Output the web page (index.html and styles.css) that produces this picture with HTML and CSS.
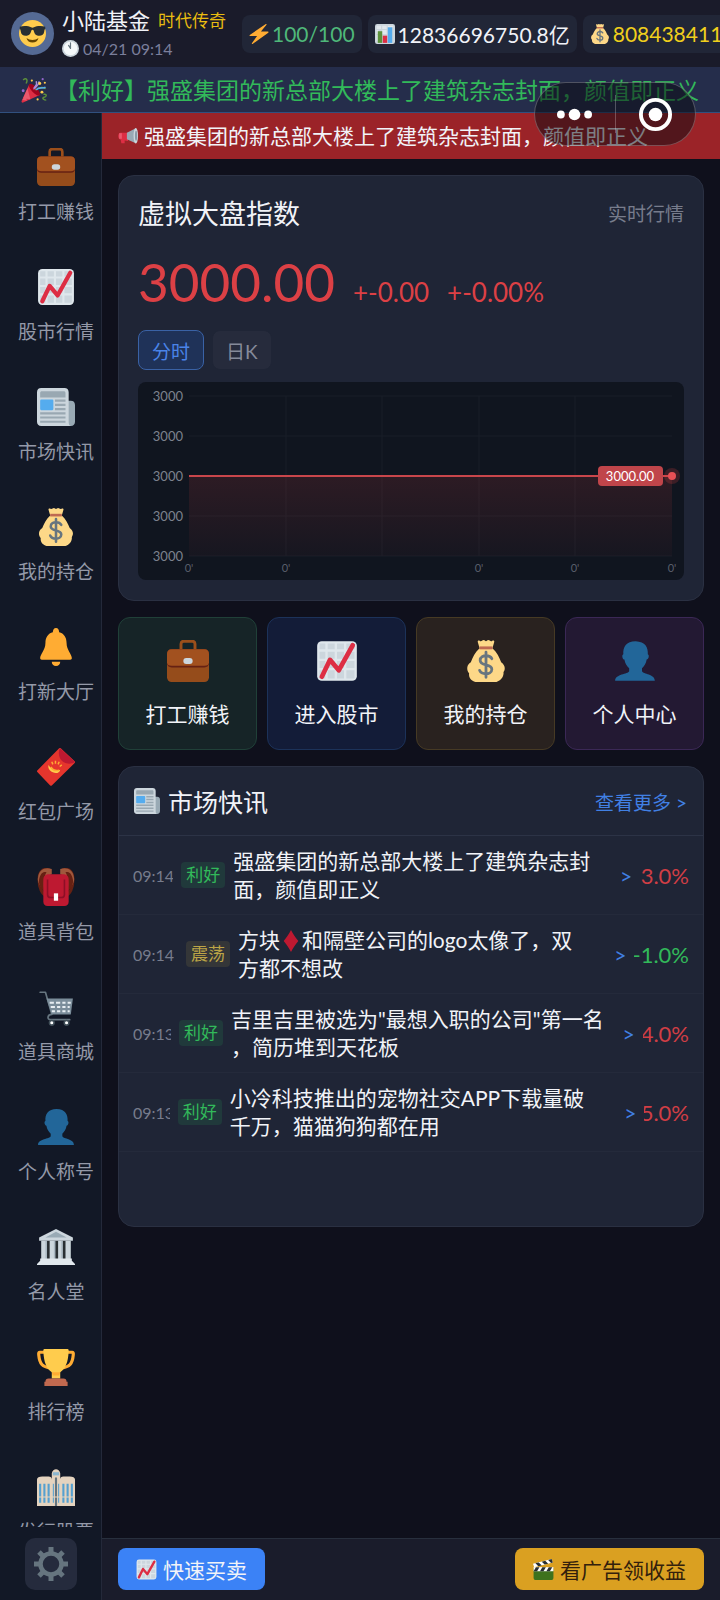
FILE: index.html
```html
<!DOCTYPE html>
<html lang="zh-CN">
  <head>
    <meta charset="UTF-8" />
    <meta name="viewport" content="width=device-width, initial-scale=1.0" />
    <title>小陆基金</title>
    <link rel="stylesheet" href="styles.css">
  </head>
  <body>
    <!-- icon set -->
    <svg class="sprite" aria-hidden="true">
      <symbol id="cool" viewBox="0 0 36 36">
        <circle cx="18" cy="18" r="18" fill="#ffcc4d"/>
        <path d="M10 24c4 3.500 12 3.500 16 0-1 4-4 6-8 6s-7-2-8-6z" fill="#664500"/>
        <path d="M1 9c5-1.500 12-1 15 .8 1 .5 3 .5 4 0C23 8 30 7.500 35 9v3c-1 .5-1 1-1.300 3-.6 4.500-3 6-6.700 6-5 0-6.500-3-7.500-7-.3-1.500-2.700-1.500-3 0-1 4-2.500 7-7.500 7-3.700 0-6.100-1.500-6.700-6C2 13 2 12.500 1 12z" fill="#292f33"/>
      </symbol>
      <symbol id="clock" viewBox="0 0 36 36">
        <circle cx="18" cy="18" r="18" fill="#ccd6dd"/>
        <circle cx="18" cy="18" r="14.500" fill="#f5f8fa"/>
        <path d="M18 6v12M18 18l-4-6.500" stroke="#66757f" stroke-width="2.500" stroke-linecap="round"/>
      </symbol>
      <symbol id="bolt" viewBox="0 0 36 36">
        <path d="M35 14.500c-.2-.6-.5-.8-1.200-.8H21.500L31.500 1.200c.6-.9-.3-1.600-1.200-1.100L1.400 19.800c-.8.700-.5 1.900.8 1.900h12.300L5.200 34.700c-.6 1 .3 1.700 1.200 1.200L34.700 15.700c.4-.3.500-.7.300-1.200z" fill="#ffac33"/>
      </symbol>
      <symbol id="bars" viewBox="0 0 36 36">
        <rect width="36" height="36" rx="4" fill="#ccd6dd"/>
        <path d="M3 3h8v6H3zm10 0h8v6h-8zm10 0h10v3H23zM3 11h3v7H3zm10 0h8v7h-8zM3 20h2v10H3z" fill="#e1e8ed"/>
        <path d="M5 13h8v21H5z" fill="#5c913b"/>
        <path d="M14 21h8v13h-8z" fill="#dd2e44"/>
        <path d="M23 6h8v28h-8z" fill="#55acee"/>
      </symbol>
      <symbol id="bag" viewBox="0 0 36 36">
        <path d="M12.500 7L11 2c-.5-1.500.8-2 1.800-1.200C14 1.600 15 .1 16 .1S17.300 1 18 1s1-.9 2-.9 2 1.500 3.200.7c1-.8 2.300-.3 1.800 1.200L23.500 7z" fill="#fdd888"/>
        <path d="M23.500 7c4 3.500 6 8 7.500 12 4 3 3.500 6.500 2 8.500.5 4-2.500 7.500-6 8.500H9c-3.500-1-6-3.500-5.500-7.500C1 25.500 1.500 21 5 19c1.500-4 3.500-8.500 7.500-12z" fill="#fdd888"/>
        <path d="M12.500 5.500h11V8h-11z" fill="#bf6952"/>
        <path d="M23 16c-1-2-3-2.500-5-2.500s-5 1-5 4c0 5 10 2.500 10 7.500 0 3-3 4-5 4s-4.500-.5-5.500-3M18 10.500V32" fill="none" stroke="#67757f" stroke-width="2.400" stroke-linecap="round"/>
      </symbol>
      <symbol id="party" viewBox="0 0 36 36">
        <path d="M11.500 10L1 33c-.8 2 .3 3 2 2.300L26 25z" fill="#dd2e44"/>
        <path d="M9 15.500L3 29l10 2zM6 22l-4 10 6 1z" fill="#ea596e"/>
        <ellipse cx="18.500" cy="17.500" rx="4" ry="10.500" transform="rotate(-43 18.500 17.500)" fill="#a0041e"/>
        <path d="M18 17c-1-5 6-4 3-11M19 16c2-5 6-3 6-10" fill="none" stroke="#aa8dd8" stroke-width="2"/>
        <path d="M20 18c4-3 9-5 14-2" fill="none" stroke="#77b255" stroke-width="2"/>
        <path d="M3 4c4-4 7 0 4 5M31 24c5-1 5 3 1 4s0 4 3 4" fill="none" stroke="#5c913b" stroke-width="2"/>
        <path d="M21 18c3-5 8-1 13-4" fill="none" stroke="#55acee" stroke-width="2"/>
        <g fill="#ffcc4d"><circle cx="26" cy="9" r="2"/><circle cx="33" cy="8" r="1.500"/><circle cx="29" cy="21" r="2"/><circle cx="15" cy="5" r="1.500"/><circle cx="23" cy="31" r="1.500"/></g>
        <g fill="#9266cc"><circle cx="3" cy="19" r="2"/><circle cx="30" cy="3" r="1.500"/></g>
      </symbol>
      <symbol id="horn" viewBox="0 0 36 36">
        <path d="M4 12h14v15l-6-1v5H6l-1-6c-6-1-6-12-1-13z" fill="#dd2e44"/>
        <path d="M2 13h5v10H2z" fill="#ea596e"/>
        <path d="M16 12L32 4v27l-16-7z" fill="#99aab5"/>
        <ellipse cx="32" cy="17.500" rx="4" ry="14" fill="#ccd6dd"/>
        <ellipse cx="32.500" cy="17.500" rx="2" ry="9" fill="#8899a6"/>
      </symbol>
      <symbol id="case" viewBox="0 0 36 36">
        <path d="M12 9V3.500C12 2 13 1 14.500 1h7C23 1 24 2 24 3.500V9" fill="none" stroke="#9b4f1b" stroke-width="2.500"/>
        <rect y="8" width="36" height="28" rx="4" fill="#954c1b"/>
        <path d="M0 12c0-2.500 1.500-4 4-4h28c2.500 0 4 1.500 4 4v8c0 2-1.500 3.500-4 3.500H4c-2.500 0-4-1.500-4-3.500z" fill="#662113"/>
        <path d="M0 12c0-2.500 1.500-4 4-4h28c2.500 0 4 1.500 4 4v7c0 2-1.500 3-4 3H4c-2.500 0-4-1-4-3z" fill="#a2511f"/>
        <rect x="14" y="15.500" width="8" height="5" rx="2.500" fill="#ccd6dd"/>
      </symbol>
      <symbol id="up" viewBox="0 0 36 36">
        <rect x="1" y="1" width="34" height="34" rx="4" fill="#dfe7ec"/>
        <path d="M3 3h5v5H3zm7 0h6v5h-6zm8 0h6v5h-6zm8 0h7v5h-7zM3 10h5v6H3zm7 0h6v6h-6zm8 0h6v6h-6zm8 0h7v6h-7zM3 18h5v6H3zm7 0h6v6h-6zm8 0h6v6h-6zm8 0h7v6h-7zM3 26h5v7H3zm7 0h6v7h-6zm8 0h6v7h-6zm8 0h7v7h-7z" fill="#ccd6dd"/>
        <path d="M5 31.500l7-14.500 7.500 9L31.500 4.500" fill="none" stroke="#dd2e44" stroke-width="4" stroke-linecap="round" stroke-linejoin="round"/>
      </symbol>
      <symbol id="paper" viewBox="0 0 36 36">
        <path d="M27 12h5c2.500 0 4 1.500 4 4v16c0 2.500-1.500 4-4 4h-6z" fill="#99aab5"/>
        <path d="M0 4c0-2.500 1.500-4 4-4h22c2.500 0 4 1.500 4 4v28c0 2 .5 4 2 4H4c-2.500 0-4-1.500-4-4z" fill="#ccd6dd"/>
        <path d="M3 5c0-1.500.5-2 2-2h20c1.500 0 2 .5 2 2v4H3zM17 11h10v2H17zm0 4h10v2H17zm0 4h10v2H17zM3 23h24v2H3zm0 4h24v2H3zm0 4h24v2H3z" fill="#99a8b2"/>
        <rect x="3" y="11" width="12.500" height="10" rx="1" fill="#55acee"/>
      </symbol>
      <symbol id="bell" viewBox="0 0 36 36">
        <path d="M14 32h8c0 2.500-1.500 4-4 4s-4-1.500-4-4zM28 14c0 7 5 11 5 14.500 0 1-.5 1.500-1.500 1.500h-27C3.500 30 3 29.500 3 28.500 3 25 8 21 8 14c0-5 2.500-9 7-10 0-2 1-4 3-4s3 2 3 4c4.500 1 7 5 7 10z" fill="#ffac33"/>
      </symbol>
      <symbol id="redpack" viewBox="0 0 36 36">
        <path d="M21 .3c.5-.5 1-.5 1.500 0L35.700 12.600c.5.5.5 1 0 1.500L14 35.500c-.5.5-1 .5-1.500 0L.3 22.700c-.5-.5-.5-1 0-1.500z" fill="#e5352d"/>
        <path d="M21.700 0L36 13.300c-4 2.500-9 1.700-12-.8s-4.500-8-2.300-12.500z" fill="#be1931"/>
        <path d="M11 16c2 4 6 6 11 4.500-.5 3-4 4-7 2.500s-5-4-4-7z" fill="#ffcc4d"/>
        <path d="M13 18c2 3 5 4 8 3M14 13l1 2.500M17.500 12v3M21 13l-1 2.500M23.500 16l-2 1.500" fill="none" stroke="#ffac33" stroke-width="1.400"/>
      </symbol>
      <symbol id="pack" viewBox="0 0 36 36">
        <path d="M12 2C6 0 2 3 2 11c0 8 3 14 7 15M24 2c6-2 10 1 10 9 0 8-3 14-7 15" fill="none" stroke="#662113" stroke-width="3"/>
        <path d="M1 9C2 1 8-1 14 1v5C8 7 7 14 7 20 3 18 0 13 1 9zM35 9C34 1 28-1 22 1v5c6 1 7 8 7 14 4-2 7-7 6-11z" fill="#a0583c"/>
        <path d="M2 11C3 5 6 3 9 4 6 9 6 15 7 22 4 20 1 15 2 11zM34 11c-1-6-4-8-7-7 3 5 3 11 2 18 3-2 6-7 5-11z" fill="#662113"/>
        <path d="M6 11c0-3 2-5 5-5h14c3 0 5 2 5 5v21c0 2.500-1.500 4-4 4H10c-2.500 0-4-1.500-4-4z" fill="#be1931"/>
        <path d="M10 11v14c0 2 1 3 3 3h10c2 0 3-1 3-3V11" fill="none" stroke="#8d0f26" stroke-width="1.500"/>
        <path d="M16 24h4v7h-4z" fill="#fff"/>
      </symbol>
      <symbol id="cart" viewBox="0 0 36 36">
        <path d="M3 4h5l6 21c-4 0-5 5-1 5h18" fill="none" stroke="#66757f" stroke-width="1.600" stroke-linecap="round" stroke-linejoin="round"/>
        <path d="M9 10h25l-2 15H14z" fill="#7b8d9a"/>
        <path d="M12 13h4v2h-4zm6 0h4v2h-4zm6 0h3v2h-3zm5 0h3v2h-3zM13 17h4v2h-4zm6 0h3v2h-3zm5 0h3v2h-3zm5 0h2v2h-2zM14 21h3v2h-3zm5 0h3v2h-3zm5 0h3v2h-3zm5 0h2v2h-2z" fill="#e8eef2"/>
        <circle cx="14" cy="33" r="2.200" fill="#fff" stroke="#414f59" stroke-width="1.500"/>
        <circle cx="28" cy="33" r="2.200" fill="#fff" stroke="#414f59" stroke-width="1.500"/>
      </symbol>
      <symbol id="bust" viewBox="0 0 36 36">
        <path d="M24 26.800v-2.500c2-1.800 3.500-4.300 4-7.500.8-.1 1.500-1 1.700-2 .3-1.200 0-2.200-.7-2.500.3-6-2-11-10.500-11.300C10.500 1 7.500 6 8 12.300c-.8.300-1 1.300-.8 2.500.3 1.100.9 2 1.700 2 .6 3.200 2 5.700 4.100 7.500v2.500C12 29.500 1 29 1 35h34c0-6-10-5.500-11-8.200z" fill="#226699"/>
      </symbol>
      <symbol id="hall" viewBox="0 0 36 36">
        <path d="M4 12h28v18H4z" fill="#292f33"/>
        <path d="M18 1l16 8v3H2V9z" fill="#ccd6dd"/>
        <path d="M18 3.500L28 9H8z" fill="#99aab5"/>
        <path d="M4 12h5v18H4zm8 0h5v18h-5zm8 0h4v18h-4zm7 0h5v18h-5z" fill="#ccd6dd"/>
        <path d="M8 12h1.500v18H8zm8 0h1.500v18H16zm7 0h1.500v18H23z" fill="#aab8c2"/>
        <path d="M3 29h30v2l3 3v1H0v-1l3-3z" fill="#e1e8ed"/>
      </symbol>
      <symbol id="cup" viewBox="0 0 36 36">
        <path d="M9 4H2.500C1.500 4 1.500 5 1.700 7 2.500 15 5 18 13 19M27 4h6.500C34.500 4 34.500 5 34.300 7 33.500 15 31 18 23 19" fill="none" stroke="#ffac33" stroke-width="3"/>
        <path d="M7 1h22c1 0 1 1 1 2-.5 11-3 16-8 20v6h-8v-6C9 19 6.500 14 6 3c0-1 0-2 1-2z" fill="#ffcc4d"/>
        <path d="M14 23h8l-1 3h-6z" fill="#ffac33"/>
        <path d="M11 29h14c2 0 3 1 3 3h1v4H7v-4h1c0-2 1-3 3-3z" fill="#c1694f"/>
      </symbol>
      <symbol id="tower" viewBox="0 0 36 36">
        <path d="M0 11c0-2 2-3 5-3h6c2 0 3 1 3 3v25H0zM22 11c0-2 1-3 3-3h6c3 0 5 1 5 3v25H22zM14 5c1-5 7-5 8 0v31h-8z" fill="#e4d3bf"/>
        <path d="M2 15h2v18H2zm4 0h2v18H6zm4 0h2v18h-2zm14 0h2v18h-2zm4 0h2v18h-2zm4 0h2v18h-2zM15 15h1v18h-1zm5 0h1v18h-1z" fill="#55a0d0"/>
        <path d="M17 9h2v27h-2z" fill="#66757f"/>
        <path d="M15 4h6v3h-6z" fill="#8ab6d0"/>
        <path d="M1 27h34v1H1z" fill="#e4d3bf"/>
      </symbol>
      <symbol id="gear" viewBox="0 0 36 36">
        <path d="M15.500 1h5v7h-5zm0 27h5v7h-5z" fill="#66757f"/>
        <path d="M15.500 1h5v7h-5zm0 27h5v7h-5z" fill="#66757f" transform="rotate(45 18 18)"/>
        <path d="M15.500 1h5v7h-5zm0 27h5v7h-5z" fill="#66757f" transform="rotate(90 18 18)"/>
        <path d="M15.500 1h5v7h-5zm0 27h5v7h-5z" fill="#66757f" transform="rotate(135 18 18)"/>
        <circle cx="18" cy="18" r="10.500" fill="none" stroke="#66757f" stroke-width="4.500"/>
      </symbol>
      <symbol id="diamond" viewBox="0 0 36 36">
        <path d="M18 0c3 6 7 12 12 18-5 6-9 12-12 18C15 30 11 24 6 18 11 12 15 6 18 0z" fill="#be1931"/>
      </symbol>
      <symbol id="clap" viewBox="0 0 36 36">
        <path d="M1 16h34v16c0 2.500-1.500 4-4 4H5c-2.500 0-4-1.500-4-4z" fill="#3e721d"/>
        <path d="M1 14h34v7H1z" fill="#fff"/>
        <path d="M5 14h6l-4 7H1zm11 0h6l-4 7h-6zm11 0h6l-4 7h-6z" fill="#292f33"/>
        <path d="M0 8L32 0l2 6L2 14z" fill="#fff"/>
        <path d="M4 7l6-1 5 5-6 1.500zM15 4.500l6-1.500 5 5-6 1.500zM26 1.500l6-1.500 2 6-3 .8z" fill="#292f33"/>
      </symbol>
    </svg>

    <header class="topbar">
      <div class="avatar"><svg><use href="#cool"/></svg></div>
      <div class="user">
        <div class="user-name">小陆基金 <span class="user-title">时代传奇</span></div>
        <div class="user-time"><svg><use href="#clock"/></svg>04/21 09:14</div>
      </div>
      <div class="stats">
        <div class="stat stat-energy"><svg><use href="#bolt"/></svg>100/100</div>
        <div class="stat"><svg><use href="#bars"/></svg>12836696750.8亿</div>
        <div class="stat stat-money"><svg><use href="#bag"/></svg>808438411</div>
      </div>
    </header>

    <div class="ticker"><svg><use href="#party"/></svg>【利好】强盛集团的新总部大楼上了建筑杂志封面，颜值即正义</div>

    <div class="layout">
      <aside class="sidebar">
        <nav class="menu">
          <a href="#"><svg><use href="#case"/></svg>打工赚钱</a>
          <a href="#"><svg><use href="#up"/></svg>股市行情</a>
          <a href="#"><svg><use href="#paper"/></svg>市场快讯</a>
          <a href="#"><svg><use href="#bag"/></svg>我的持仓</a>
          <a href="#"><svg><use href="#bell"/></svg>打新大厅</a>
          <a href="#"><svg><use href="#redpack"/></svg>红包广场</a>
          <a href="#"><svg><use href="#pack"/></svg>道具背包</a>
          <a href="#"><svg><use href="#cart"/></svg>道具商城</a>
          <a href="#"><svg><use href="#bust"/></svg>个人称号</a>
          <a href="#"><svg><use href="#hall"/></svg>名人堂</a>
          <a href="#"><svg><use href="#cup"/></svg>排行榜</a>
          <a href="#"><svg><use href="#tower"/></svg>发行股票</a>
        </nav>
        <button class="settings" aria-label="设置"><svg><use href="#gear"/></svg></button>
      </aside>

      <div class="page">
        <div class="notice"><svg><use href="#horn"/></svg>强盛集团的新总部大楼上了建筑杂志封面，颜值即正义</div>

        <main class="content">
          <section class="card index-card">
            <div class="index-head">
              <h2>虚拟大盘指数</h2>
              <span>实时行情</span>
            </div>
            <div class="index-price">
              <strong>3000.00</strong>
              <span>+-0.00</span>
              <span>+-0.00%</span>
            </div>
            <div class="tabs">
              <button class="tab active">分时</button>
              <button class="tab">日K</button>
            </div>
            <svg class="chart" viewBox="0 0 546 198">
              <defs>
                <linearGradient id="area" x1="0" y1="0" x2="0" y2="1">
                  <stop offset="0" stop-color="#ef4444" stop-opacity="0.13"/>
                  <stop offset="1" stop-color="#ef4444" stop-opacity="0.03"/>
                </linearGradient>
              </defs>
              <path class="grid" d="M51 14H534M51 54H534M51 134H534M51 174H534M148 14V174M244 14V174M341 14V174M437 14V174"/>
              <rect x="51" y="94" width="483" height="80" fill="url(#area)"/>
              <path d="M51 94H534" stroke="#c9464b" stroke-width="2"/>
              <g class="axis-y">
                <text x="45" y="19">3000</text>
                <text x="45" y="59">3000</text>
                <text x="45" y="99">3000</text>
                <text x="45" y="139">3000</text>
                <text x="45" y="179">3000</text>
              </g>
              <g class="axis-x">
                <text x="51" y="190">0'</text>
                <text x="148" y="190">0'</text>
                <text x="341" y="190">0'</text>
                <text x="437" y="190">0'</text>
                <text x="534" y="190">0'</text>
              </g>
              <rect x="460" y="84" width="65" height="20" rx="4" fill="#c0454a"/>
              <text class="price-tag" x="492" y="99">3000.00</text>
              <circle cx="534" cy="94" r="8" fill="#ef4444" opacity="0.2"/>
              <circle cx="534" cy="94" r="4" fill="#e65055"/>
            </svg>
          </section>

          <section class="quick">
            <button class="green"><svg><use href="#case"/></svg>打工赚钱</button>
            <button class="blue"><svg><use href="#up"/></svg>进入股市</button>
            <button class="gold"><svg><use href="#bag"/></svg>我的持仓</button>
            <button class="purple"><svg><use href="#bust"/></svg>个人中心</button>
          </section>

          <section class="card news">
            <div class="news-head">
              <h2><svg><use href="#paper"/></svg>市场快讯</h2>
              <a href="#">查看更多 &gt;</a>
            </div>
            <div class="news-row">
              <span class="news-time">09:14</span>
              <span class="tag good">利好</span>
              <p class="news-text">强盛集团的新总部大楼上了建筑杂志封面，颜值即正义</p>
              <span class="arrow">&gt;</span>
              <span class="change up">3.0%</span>
            </div>
            <div class="news-row">
              <span class="news-time">09:14</span>
              <span class="tag shake">震荡</span>
              <p class="news-text">方块<svg><use href="#diamond"/></svg>和隔壁公司的logo太像了，双方都不想改</p>
              <span class="arrow">&gt;</span>
              <span class="change down">-1.0%</span>
            </div>
            <div class="news-row">
              <span class="news-time">09:13</span>
              <span class="tag good">利好</span>
              <p class="news-text"><span class="keep">吉里吉里被选为"最想入职的公司"第一名</span>，简历堆到天花板</p>
              <span class="arrow">&gt;</span>
              <span class="change up">4.0%</span>
            </div>
            <div class="news-row">
              <span class="news-time">09:13</span>
              <span class="tag good">利好</span>
              <p class="news-text">小冷科技推出的宠物社交APP下载量破千万，猫猫狗狗都在用</p>
              <span class="arrow">&gt;</span>
              <span class="change up">5.0%</span>
            </div>
          </section>
        </main>

        <footer class="actions">
          <button class="trade"><svg><use href="#up"/></svg>快速买卖</button>
          <button class="ad"><svg><use href="#clap"/></svg>看广告领收益</button>
        </footer>
      </div>
    </div>

    <!-- mini program capsule -->
    <div class="capsule">
      <button aria-label="更多">
        <svg viewBox="0 0 36 36" fill="#fff"><circle cx="4" cy="18" r="4"/><circle cx="18" cy="18" r="6"/><circle cx="32" cy="18" r="4"/></svg>
      </button>
      <button aria-label="关闭">
        <svg viewBox="0 0 36 36"><circle cx="18" cy="18" r="15" fill="none" stroke="#fff" stroke-width="4"/><circle cx="18" cy="18" r="7" fill="#fff"/></svg>
      </button>
    </div>
  </body>
</html>
```
FILE: styles.css
```css
* {
  box-sizing: border-box;
}

body {
  margin: 0;
  height: 100vh;
  display: flex;
  flex-direction: column;
  overflow: hidden;
  font-family: Lato, "Noto Sans CJK SC", sans-serif;
  background-color: #0f101c;
  color: #f1f3f8;
}

h2,
p {
  margin: 0;
  font-weight: normal;
}

button {
  font-family: inherit;
  color: inherit;
  border: none;
  padding: 0;
  cursor: pointer;
}

a {
  text-decoration: none;
}

svg {
  flex-shrink: 0;
}

.sprite {
  position: absolute;
  width: 0;
  height: 0;
}

/* top bar */
.topbar {
  height: 67px;
  flex-shrink: 0;
  display: flex;
  align-items: center;
  padding-left: 11px;
  background-color: #1a1b2a;
  white-space: nowrap;
  overflow: hidden;
}

.avatar {
  width: 43px;
  height: 43px;
  flex-shrink: 0;
  display: flex;
  align-items: center;
  justify-content: center;
  border-radius: 50%;
  background-color: #556a94;
}

.avatar svg {
  width: 27px;
  height: 27px;
}

.user {
  width: 180px;
  flex-shrink: 0;
  margin-left: 8px;
}

.user-name {
  display: flex;
  align-items: center;
  gap: 8px;
  font-size: 22px;
  line-height: 30px;
}

.user-title {
  font-size: 17px;
  color: #e9bd10;
}

.user-time {
  display: flex;
  align-items: center;
  gap: 4px;
  font-size: 16px;
  line-height: 26px;
  color: #7b7f9c;
}

.user-time svg {
  width: 17px;
  height: 17px;
}

.stats {
  display: flex;
  gap: 6px;
}

.stat {
  height: 38px;
  flex-shrink: 0;
  display: flex;
  align-items: center;
  gap: 3px;
  padding: 0 7px;
  border-radius: 8px;
  background-color: #212637;
  font-size: 21px;
}

.stat svg {
  width: 20px;
  height: 20px;
}

.stat-energy {
  color: #4fb87a;
}

.stat-money {
  color: #f0cf1c;
}

/* scrolling news line */
.ticker {
  height: 46px;
  flex-shrink: 0;
  display: flex;
  align-items: center;
  justify-content: center;
  gap: 8px;
  border-bottom: 1px solid #31507f;
  background-color: #252d4b;
  color: #32b95a;
  font-size: 23px;
  line-height: 44px;
  white-space: nowrap;
}

.ticker svg {
  width: 26px;
  height: 26px;
}

.layout {
  flex: 1;
  min-height: 0;
  display: flex;
}

/* sidebar */
.sidebar {
  width: 102px;
  flex-shrink: 0;
  display: flex;
  flex-direction: column;
  border-right: 1px solid #24293a;
  background-color: #121826;
}

.menu {
  flex: 1;
  min-height: 0;
  overflow: hidden;
  padding: 13px 0 0 11px;
}

.menu a {
  height: 120px;
  display: flex;
  flex-direction: column;
  align-items: center;
  justify-content: center;
  gap: 14px;
  font-size: 19px;
  line-height: 24px;
  color: #9499a8;
  white-space: nowrap;
}

.menu svg {
  width: 38px;
  height: 38px;
}

.settings {
  width: 52px;
  height: 52px;
  flex-shrink: 0;
  align-self: center;
  margin: 11px 0 10px;
  display: flex;
  align-items: center;
  justify-content: center;
  border-radius: 10px;
  background-color: #252b3d;
}

.settings svg {
  width: 36px;
  height: 36px;
}

/* main column */
.page {
  flex: 1;
  min-width: 0;
  display: flex;
  flex-direction: column;
}

.notice {
  height: 46px;
  flex-shrink: 0;
  display: flex;
  align-items: center;
  gap: 6px;
  padding-left: 16px;
  background-color: #9b2328;
  font-size: 21px;
  line-height: 44px;
  white-space: nowrap;
  overflow: hidden;
}

.notice svg {
  width: 20px;
  height: 20px;
}

.content {
  flex: 1;
  min-height: 0;
  overflow: hidden;
  padding: 16px;
  display: flex;
  flex-direction: column;
  gap: 16px;
}

.card {
  flex-shrink: 0;
  border: 1px solid #2a3042;
  border-radius: 16px;
  background-color: #1f2536;
}

.index-card {
  padding: 18px 19px 20px;
}

.index-head {
  display: flex;
  align-items: center;
  justify-content: space-between;
  line-height: 40px;
  font-size: 19px;
  color: #777c8c;
}

.index-head h2 {
  font-size: 27px;
  color: #f1f3f8;
}

.index-price {
  display: flex;
  align-items: baseline;
  gap: 18px;
  margin: 16px 0;
  line-height: 32px;
  font-size: 26px;
  color: #dc4045;
}

.index-price strong {
  font-size: 53px;
  font-weight: normal;
  line-height: 64px;
}

.tabs {
  display: flex;
  gap: 8px;
}

.tab {
  height: 40px;
  padding: 0 13px;
  border: 1px solid #1f2536;
  border-radius: 8px;
  background-color: #262b3c;
  font-size: 19px;
  color: #858a9a;
}

.tab.active {
  border-color: #3a62a5;
  background-color: #1f3258;
  color: #4a84e8;
}

.chart {
  display: block;
  width: 100%;
  margin-top: 12px;
  border-radius: 8px;
  background-color: #10151f;
}

.grid {
  stroke: #191e29;
}

.axis-y {
  font-size: 13px;
  fill: #7d828e;
  text-anchor: end;
}

.axis-x {
  font-size: 11px;
  fill: #5a5f6b;
  text-anchor: middle;
}

.price-tag {
  font-size: 13px;
  fill: #fff;
  text-anchor: middle;
}

/* shortcuts */
.quick {
  flex-shrink: 0;
  display: grid;
  grid-template-columns: repeat(4, 1fr);
  gap: 10px;
}

.quick button {
  height: 133px;
  display: flex;
  flex-direction: column;
  align-items: center;
  justify-content: center;
  gap: 18px;
  border: 1px solid;
  border-radius: 12px;
  font-size: 21px;
  line-height: 28px;
  color: #f1f3f8;
}

.quick svg {
  width: 42px;
  height: 42px;
}

.quick .green {
  background-color: #162427;
  border-color: #204038;
}

.quick .blue {
  background-color: #131c38;
  border-color: #1c3259;
}

.quick .gold {
  background-color: #29221f;
  border-color: #463a24;
}

.quick .purple {
  background-color: #231933;
  border-color: #3b2856;
}

/* news */
.news {
  padding-bottom: 74px;
}

.news-head {
  height: 69px;
  display: flex;
  align-items: center;
  justify-content: space-between;
  padding: 0 16px 0 15px;
  border-bottom: 1px solid #2c3346;
}

.news-head h2 {
  display: flex;
  align-items: center;
  gap: 8px;
  font-size: 25px;
}

.news-head svg {
  width: 26px;
  height: 26px;
}

.news-head a {
  font-size: 19px;
  color: #4180e4;
}

.news-row {
  display: flex;
  align-items: center;
  gap: 8px;
  height: 79px;
  padding: 0 14px;
  border-bottom: 1px solid #242a3b;
}

.news-time {
  flex: 0 1 56px;
  overflow: hidden;
  font-size: 16px;
  color: #777c8c;
}

.tag {
  flex-shrink: 0;
  padding: 0 5px;
  border-radius: 4px;
  font-size: 17px;
  line-height: 26px;
}

.tag.good {
  background-color: #20393b;
  color: #32b95a;
}

.tag.shake {
  background-color: #343638;
  color: #bda546;
}

.news-text {
  flex: 0 1 auto;
  min-width: 0;
  font-size: 21px;
  line-height: 28px;
  word-break: break-all;
  line-break: anywhere;
}

.news-text svg {
  width: 22px;
  height: 22px;
  vertical-align: -4px;
}

.keep {
  white-space: nowrap;
}

.arrow {
  flex-shrink: 0;
  margin-left: 16px;
  font-size: 21px;
  color: #4180e4;
}

.change {
  flex: 0 1 68px;
  display: flex;
  justify-content: flex-end;
  overflow: hidden;
  font-size: 22px;
}

.change.up {
  color: #d03e45;
}

.change.down {
  color: #32b95a;
}

/* bottom bar */
.actions {
  flex-shrink: 0;
  display: flex;
  align-items: center;
  justify-content: space-between;
  padding: 9px 16px 10px;
  border-top: 1px solid #282f3d;
  background-color: #1a1c2b;
}

.actions button {
  height: 42px;
  display: flex;
  align-items: center;
  gap: 6px;
  padding: 0 18px;
  border-radius: 8px;
  font-size: 21px;
}

.actions svg {
  width: 21px;
  height: 21px;
}

.trade {
  background-color: #3b82f6;
}

.actions .ad {
  background-color: #daa021;
  color: #33200c;
}

.capsule {
  position: absolute;
  top: 82px;
  right: 24px;
  width: 162px;
  height: 64px;
  display: flex;
  align-items: center;
  border: 1px solid rgba(255, 255, 255, 0.25);
  border-radius: 32px;
  background-color: rgba(10, 10, 16, 0.5);
}

.capsule button {
  flex: 1;
  height: 38px;
  display: flex;
  align-items: center;
  justify-content: center;
  background: none;
}

.capsule button + button {
  border-left: 1px solid rgba(255, 255, 255, 0.25);
}

.capsule svg {
  width: 35px;
  height: 35px;
}
```
